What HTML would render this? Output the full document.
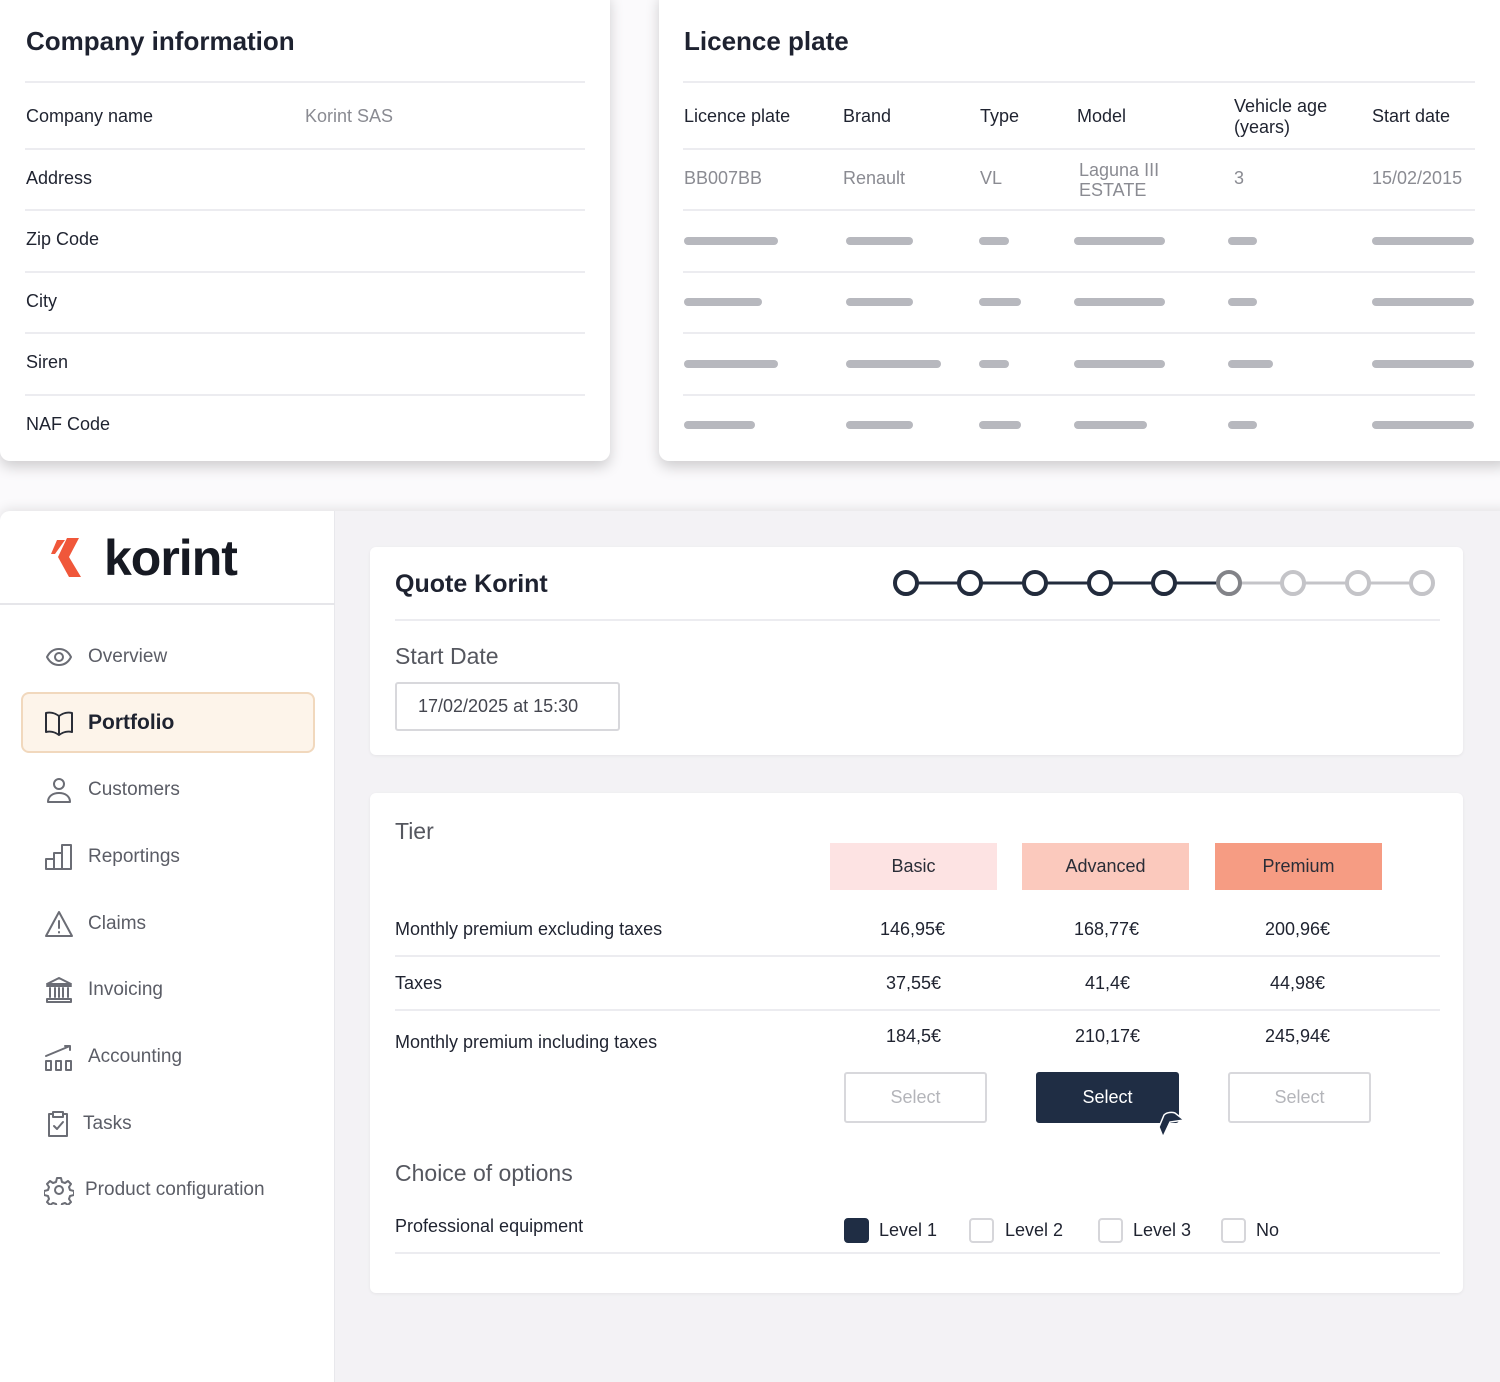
<!DOCTYPE html>
<html><head><meta charset="utf-8"><style>
*{margin:0;padding:0;box-sizing:border-box}
html{overflow:hidden;height:1382px}
body{width:1500px;height:1382px;background:#fbfafc;font-family:"Liberation Sans",sans-serif;position:relative;overflow:hidden;color:#1f2330}
.a{position:absolute;white-space:nowrap}
.card{position:absolute;background:#fff;box-shadow:0 6px 14px rgba(0,0,0,.18)}
.ln{position:absolute;height:2px;background:#ececf0}
.bar{position:absolute;height:8px;border-radius:4px;background:#b7b8be}
.lbl{font-size:18px;color:#1f2330}
.val{font-size:18px;color:#8a8b92}
.nav{position:absolute;left:44px;font-size:19px;color:#5b5d66;display:flex;align-items:center;gap:14px}
.nav svg{width:30px;height:30px;fill:none;stroke:#6b6d75;stroke-width:2;stroke-linecap:round;stroke-linejoin:round}
.tier{position:absolute;top:843px;width:167px;height:47px;font-size:18px;display:flex;align-items:center;justify-content:center;color:#2a2d37}
.btn{position:absolute;top:1072px;width:143px;height:51px;border:2px solid #d8d8dc;border-radius:3px;font-size:18px;color:#b4b5ba;display:flex;align-items:center;justify-content:center;background:#fff}
.cb{position:absolute;top:1218px;width:25px;height:25px;border:2px solid #d6d6da;border-radius:4px}
</style></head><body>

<div class="card" style="left:0;top:-10px;width:610px;height:471px;border-radius:10px"></div>
<div class="a" style="left:26px;top:26px;font-size:26px;font-weight:bold;color:#1e2230">Company information</div>
<div class="ln" style="left:25px;top:81px;width:560px"></div>
<div class="a lbl" style="left:26px;top:106px">Company name</div>
<div class="a val" style="left:305px;top:106px">Korint SAS</div>
<div class="ln" style="left:25px;top:148px;width:560px"></div>
<div class="a lbl" style="left:26px;top:168px">Address</div>
<div class="ln" style="left:25px;top:209px;width:560px"></div>
<div class="a lbl" style="left:26px;top:229px">Zip Code</div>
<div class="ln" style="left:25px;top:271px;width:560px"></div>
<div class="a lbl" style="left:26px;top:291px">City</div>
<div class="ln" style="left:25px;top:332px;width:560px"></div>
<div class="a lbl" style="left:26px;top:352px">Siren</div>
<div class="ln" style="left:25px;top:394px;width:560px"></div>
<div class="a lbl" style="left:26px;top:414px">NAF Code</div>

<div class="card" style="left:659px;top:-10px;width:851px;height:471px;border-radius:10px"></div>
<div class="a" style="left:684px;top:26px;font-size:26px;font-weight:bold;color:#1e2230">Licence plate</div>
<div class="ln" style="left:683px;top:81px;width:792px"></div>
<div class="a lbl" style="left:684px;top:106px">Licence plate</div>
<div class="a lbl" style="left:843px;top:106px">Brand</div>
<div class="a lbl" style="left:980px;top:106px">Type</div>
<div class="a lbl" style="left:1077px;top:106px">Model</div>
<div class="a lbl" style="left:1234px;top:96px;line-height:21px">Vehicle age<br>(years)</div>
<div class="a lbl" style="left:1372px;top:106px">Start date</div>
<div class="ln" style="left:683px;top:148px;width:792px"></div>
<div class="a val" style="left:684px;top:168px">BB007BB</div>
<div class="a val" style="left:843px;top:168px">Renault</div>
<div class="a val" style="left:980px;top:168px">VL</div>
<div class="a val" style="left:1079px;top:160px;line-height:20px">Laguna III<br>ESTATE</div>
<div class="a val" style="left:1234px;top:168px">3</div>
<div class="a val" style="left:1372px;top:168px">15/02/2015</div>
<div class="ln" style="left:683px;top:209px;width:792px"></div>
<div class="ln" style="left:683px;top:271px;width:792px"></div>
<div class="ln" style="left:683px;top:332px;width:792px"></div>
<div class="ln" style="left:683px;top:394px;width:792px"></div>

<div class="bar" style="left:684px;top:237px;width:94px"></div><div class="bar" style="left:846px;top:237px;width:67px"></div><div class="bar" style="left:979px;top:237px;width:30px"></div><div class="bar" style="left:1074px;top:237px;width:91px"></div><div class="bar" style="left:1228px;top:237px;width:29px"></div><div class="bar" style="left:1372px;top:237px;width:102px"></div>
<div class="bar" style="left:684px;top:298px;width:78px"></div><div class="bar" style="left:846px;top:298px;width:67px"></div><div class="bar" style="left:979px;top:298px;width:42px"></div><div class="bar" style="left:1074px;top:298px;width:91px"></div><div class="bar" style="left:1228px;top:298px;width:29px"></div><div class="bar" style="left:1372px;top:298px;width:102px"></div>
<div class="bar" style="left:684px;top:360px;width:94px"></div><div class="bar" style="left:846px;top:360px;width:95px"></div><div class="bar" style="left:979px;top:360px;width:30px"></div><div class="bar" style="left:1074px;top:360px;width:91px"></div><div class="bar" style="left:1228px;top:360px;width:45px"></div><div class="bar" style="left:1372px;top:360px;width:102px"></div>
<div class="bar" style="left:684px;top:421px;width:71px"></div><div class="bar" style="left:846px;top:421px;width:67px"></div><div class="bar" style="left:979px;top:421px;width:42px"></div><div class="bar" style="left:1074px;top:421px;width:73px"></div><div class="bar" style="left:1228px;top:421px;width:29px"></div><div class="bar" style="left:1372px;top:421px;width:102px"></div>

<div class="card" style="left:0;top:511px;width:1510px;height:880px;border-radius:10px 0 0 0;background:#f3f2f5;box-shadow:0 -2px 12px rgba(0,0,0,.1)"></div>
<div class="a" style="left:0;top:511px;width:335px;height:880px;background:#fff;border-right:1px solid #e8e8ec;border-radius:10px 0 0 0"></div>
<div class="ln" style="left:0;top:603px;width:335px;height:2px;background:#e6e6ea"></div>
<svg class="a" style="left:50px;top:537px" width="48" height="42" viewBox="0 0 48 42"><path d="M17 1h12L19 20l12 20H19L8 20Z" fill="#f0573a"/><path d="M7 3h8L5 17H1Z" fill="#f0573a"/></svg>
<div class="a" style="left:104px;top:529px;font-size:50px;font-weight:bold;color:#161922;letter-spacing:-1px">korint</div>

<div class="nav" style="top:642px"><svg viewBox="0 0 30 30"><path d="M3 15c3-6 7-8 12-8s9 2 12 8c-3 6-7 8-12 8s-9-2-12-8z"/><circle cx="15" cy="15" r="4"/></svg>Overview</div>
<div class="a" style="left:21px;top:692px;width:294px;height:61px;background:#fdf4ea;border:2px solid #f1d8bd;border-radius:8px"></div>
<div class="nav" style="top:708px;color:#1f2330;font-size:21px;font-weight:bold"><svg viewBox="0 0 30 30" style="stroke:#2a2d37"><path d="M15 8C11 5 6 4 2 5v19c4-1 9 0 13 3 4-3 9-4 13-3V5c-4-1-9 0-13 3zM15 8v19"/></svg>Portfolio</div>
<div class="nav" style="top:775px"><svg viewBox="0 0 30 30"><circle cx="15" cy="9" r="5"/><path d="M4 27c0-6 5-9 11-9s11 3 11 9z"/></svg>Customers</div>
<div class="nav" style="top:842px"><svg viewBox="0 0 30 30"><path d="M2 27V17h8v10zM10 27V11h8v16zM18 27V3h9v24z"/></svg>Reportings</div>
<div class="nav" style="top:909px"><svg viewBox="0 0 30 30"><path d="M15 3L2 27h26z"/><path d="M15 12v7M15 23v.5"/></svg>Claims</div>
<div class="nav" style="top:975px"><svg viewBox="0 0 30 30"><path d="M15 3L3 9h24zM3 11h24M6 13v9M11 13v9M15 13v9M19 13v9M24 13v9M3 24h24v3H3z"/></svg>Invoicing</div>
<div class="nav" style="top:1042px"><svg viewBox="0 0 30 30"><path d="M2 19h5v9H2zM12 19h5v9h-5zM22 19h5v9h-5zM2 14L26 4M21 4h5v4"/></svg>Accounting</div>
<div class="nav" style="top:1109px;gap:9px"><svg viewBox="0 0 30 30"><path d="M9 5H5v22h18V5h-4M9 3h10v5H9zM10 17l3 3 6-7"/></svg>Tasks</div>
<div class="nav" style="top:1175px;gap:11px"><svg viewBox="0 0 30 30"><circle cx="15" cy="15" r="4"/><path d="M13 3h4l1 4 3 1 3-2 3 3-2 3 1 3 4 1v4l-4 1-1 3 2 3-3 3-3-2-3 1-1 4h-4l-1-4-3-1-3 2-3-3 2-3-1-3-4-1v-4l4-1 1-3-2-3 3-3 3 2 3-1z"/></svg>Product configuration</div>

<div class="a" style="left:370px;top:547px;width:1093px;height:208px;background:#fff;border-radius:6px;box-shadow:0 1px 3px rgba(0,0,0,.06)"></div>
<div class="a" style="left:395px;top:570px;font-size:25px;font-weight:bold;color:#1e2230">Quote Korint</div>
<svg class="a" style="left:880px;top:560px" width="570" height="46">
<path d="M26 23H349" stroke="#222b3c" stroke-width="3"/><path d="M349 23H542" stroke="#c4c4c8" stroke-width="3"/>
<g fill="#fff" stroke-width="4"><circle cx="26" cy="23" r="11" stroke="#222b3c"/><circle cx="90" cy="23" r="11" stroke="#222b3c"/><circle cx="155" cy="23" r="11" stroke="#222b3c"/><circle cx="220" cy="23" r="11" stroke="#222b3c"/><circle cx="284" cy="23" r="11" stroke="#222b3c"/><circle cx="349" cy="23" r="11" stroke="#828388"/><circle cx="413" cy="23" r="11" stroke="#c4c4c8"/><circle cx="478" cy="23" r="11" stroke="#c4c4c8"/><circle cx="542" cy="23" r="11" stroke="#c4c4c8"/></g></svg>
<div class="ln" style="left:395px;top:619px;width:1045px"></div>
<div class="a" style="left:395px;top:643px;font-size:23px;color:#55575f">Start Date</div>
<div class="a" style="left:395px;top:682px;width:225px;height:49px;border:2px solid #d8d8dc;border-radius:3px;font-size:18px;color:#44464f;padding:12px 0 0 21px">17/02/2025 at 15:30</div>

<div class="a" style="left:370px;top:793px;width:1093px;height:500px;background:#fff;border-radius:6px;box-shadow:0 1px 3px rgba(0,0,0,.06)"></div>
<div class="a" style="left:395px;top:818px;font-size:23px;color:#55575f">Tier</div>
<div class="tier" style="left:830px;background:#fde3e3">Basic</div>
<div class="tier" style="left:1022px;background:#fbc9bd">Advanced</div>
<div class="tier" style="left:1215px;background:#f69c83">Premium</div>
<div class="a lbl" style="left:395px;top:919px">Monthly premium excluding taxes</div>
<div class="a lbl" style="left:880px;top:919px">146,95€</div>
<div class="a lbl" style="left:1074px;top:919px">168,77€</div>
<div class="a lbl" style="left:1265px;top:919px">200,96€</div>
<div class="ln" style="left:395px;top:955px;width:1045px"></div>
<div class="a lbl" style="left:395px;top:973px">Taxes</div>
<div class="a lbl" style="left:886px;top:973px">37,55€</div>
<div class="a lbl" style="left:1085px;top:973px">41,4€</div>
<div class="a lbl" style="left:1270px;top:973px">44,98€</div>
<div class="ln" style="left:395px;top:1009px;width:1045px"></div>
<div class="a lbl" style="left:395px;top:1032px">Monthly premium including taxes</div>
<div class="a lbl" style="left:886px;top:1026px">184,5€</div>
<div class="a lbl" style="left:1075px;top:1026px">210,17€</div>
<div class="a lbl" style="left:1265px;top:1026px">245,94€</div>
<div class="btn" style="left:844px">Select</div>
<div class="btn" style="left:1036px;background:#1f2d44;border-color:#1f2d44;color:#fff">Select</div>
<div class="btn" style="left:1228px">Select</div>
<svg class="a" style="left:1155px;top:1105px" width="42" height="36"><path d="M4 22l5-12c3-3 8-3 11-2l9 7-14 2-7 15z" fill="#1f2d44" stroke="#fff" stroke-width="1.5"/></svg>
<div class="a" style="left:395px;top:1160px;font-size:23px;color:#55575f">Choice of options</div>
<div class="a lbl" style="left:395px;top:1216px">Professional equipment</div>
<div class="cb" style="left:844px;background:#1f2d44;border-color:#1f2d44"></div>
<div class="a lbl" style="left:879px;top:1220px">Level 1</div>
<div class="cb" style="left:969px"></div>
<div class="a lbl" style="left:1005px;top:1220px">Level 2</div>
<div class="cb" style="left:1098px"></div>
<div class="a lbl" style="left:1133px;top:1220px">Level 3</div>
<div class="cb" style="left:1221px"></div>
<div class="a lbl" style="left:1256px;top:1220px">No</div>
<div class="ln" style="left:395px;top:1252px;width:1045px"></div>
</body></html>
